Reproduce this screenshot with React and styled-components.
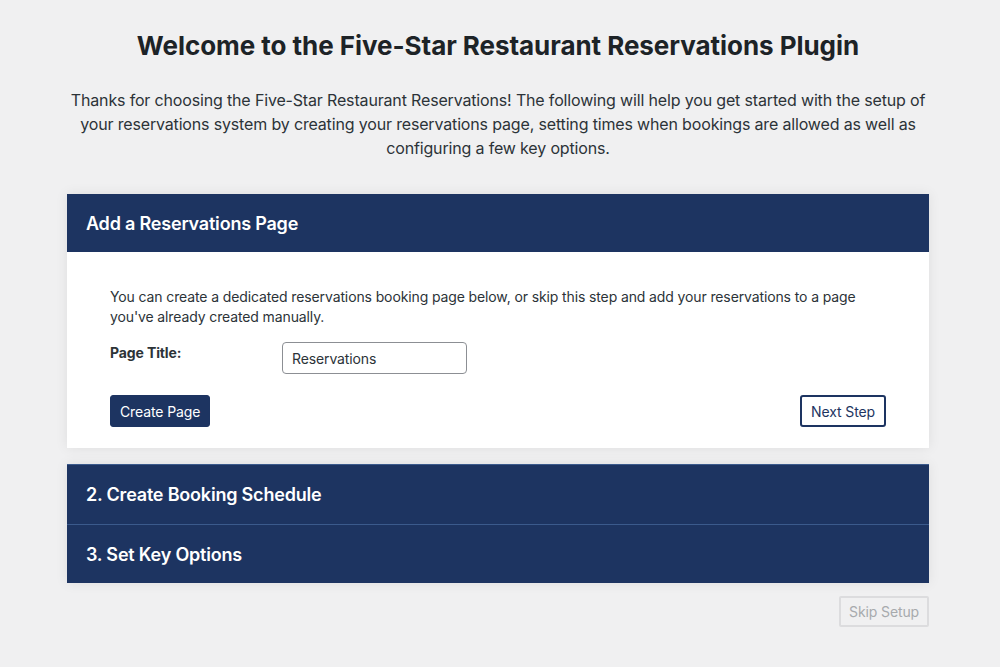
import React from 'react'
import styled, {createGlobalStyle} from 'styled-components'

const GlobalStyle = createGlobalStyle`
  html, body {
    margin: 0;
    padding: 0;
    background: #f0f0f1;
  }
  body {
    font-family: Inter, "Noto Sans", sans-serif;
    color: #1d2327;
  }
`

const Page = styled.div`
  width: 862px;
  margin: 0 0 0 67px;
  padding-top: 30px;
  padding-bottom: 40px;
`

const Title = styled.h1`
  margin: 0;
  text-align: center;
  font-size: 26px;
  line-height: 32px;
  font-weight: 700;
  letter-spacing: -0.05px;
  color: #1d2327;
`

const Intro = styled.p`
  margin: 26px 0 34px;
  text-align: center;
  font-size: 16px;
  line-height: 24px;
  letter-spacing: -0.16px;
  color: #2c3338;
`

const Section = styled.section`
  background: #fff;
  box-shadow: 0 0 12px rgba(0, 0, 0, 0.08);
  margin-bottom: ${props => props.$gap || 0}px;
`

const StepHeader = styled.div`
  background: #1d3461;
  color: #fff;
  height: ${props => props.$height || 58}px;
  display: flex;
  align-items: center;
  padding: 0 19px;
  font-size: 18px;
  font-weight: 600;
  letter-spacing: -0.2px;
  border-top: ${props => props.$divider ? '1px solid #3b5a8c' : 'none'};
  box-sizing: border-box;
`

const StepBody = styled.div`
  padding: 35px 43px 21px;
  font-size: 14px;
  line-height: 20px;
  letter-spacing: -0.12px;
  color: #2c3338;
`

const BodyText = styled.p`
  margin: 0 0 15px;
`

const FieldRow = styled.div`
  display: grid;
  grid-template-columns: 172px 185px;
  align-items: start;
`

const Label = styled.label`
  font-weight: 700;
  padding-top: 1px;
`

const Input = styled.input`
  height: 32px;
  box-sizing: border-box;
  border: 1px solid #8c8f94;
  border-radius: 4px;
  padding: 0 9px;
  font-family: inherit;
  font-size: 14px;
  letter-spacing: -0.12px;
  color: #2c3338;
`

const Actions = styled.div`
  display: flex;
  justify-content: space-between;
  margin-top: 21px;
`

const Button = styled.button`
  height: 32px;
  box-sizing: border-box;
  padding: 0 9px;
  font-family: inherit;
  font-size: 14px;
  letter-spacing: -0.12px;
  border-radius: 3px;
  cursor: pointer;
  background: ${props => props.$outline ? '#fff' : '#1d3461'};
  color: ${props => props.$outline ? '#1d3461' : '#fff'};
  border: ${props => props.$outline ? '2px solid #1d3461' : '1px solid #1d3461'};
`

const Footer = styled.div`
  display: flex;
  justify-content: flex-end;
  margin-top: 13px;
`

const SkipButton = styled.button`
  height: 31px;
  padding: 0 8px;
  font-family: inherit;
  font-size: 14px;
  letter-spacing: -0.12px;
  background: #f0f0f1;
  color: #a7aaad;
  border: 2px solid #dcdcde;
  border-radius: 2px;
`

export default function App() {
  return (
    <>
      <GlobalStyle />
      <Page>
        <Title>Welcome to the Five-Star Restaurant Reservations Plugin</Title>
        <Intro>
          Thanks for choosing the Five-Star Restaurant Reservations! The following will help you get started with the setup of your reservations system by creating your reservations page, setting times when bookings are allowed as well as configuring a few key options.
        </Intro>

        <Section $gap={16}>
          <StepHeader>Add a Reservations Page</StepHeader>
          <StepBody>
            <BodyText>
              You can create a dedicated reservations booking page below, or skip this step and add your reservations to a page you've already created manually.
            </BodyText>
            <FieldRow>
              <Label>Page Title:</Label>
              <Input defaultValue="Reservations" />
            </FieldRow>
            <Actions>
              <Button>Create Page</Button>
              <Button $outline>Next Step</Button>
            </Actions>
          </StepBody>
        </Section>

        <Section>
          <StepHeader $divider $height={60}>2. Create Booking Schedule</StepHeader>
          <StepHeader $divider $height={59}>3. Set Key Options</StepHeader>
        </Section>

        <Footer>
          <SkipButton disabled>Skip Setup</SkipButton>
        </Footer>
      </Page>
    </>
  )
}
